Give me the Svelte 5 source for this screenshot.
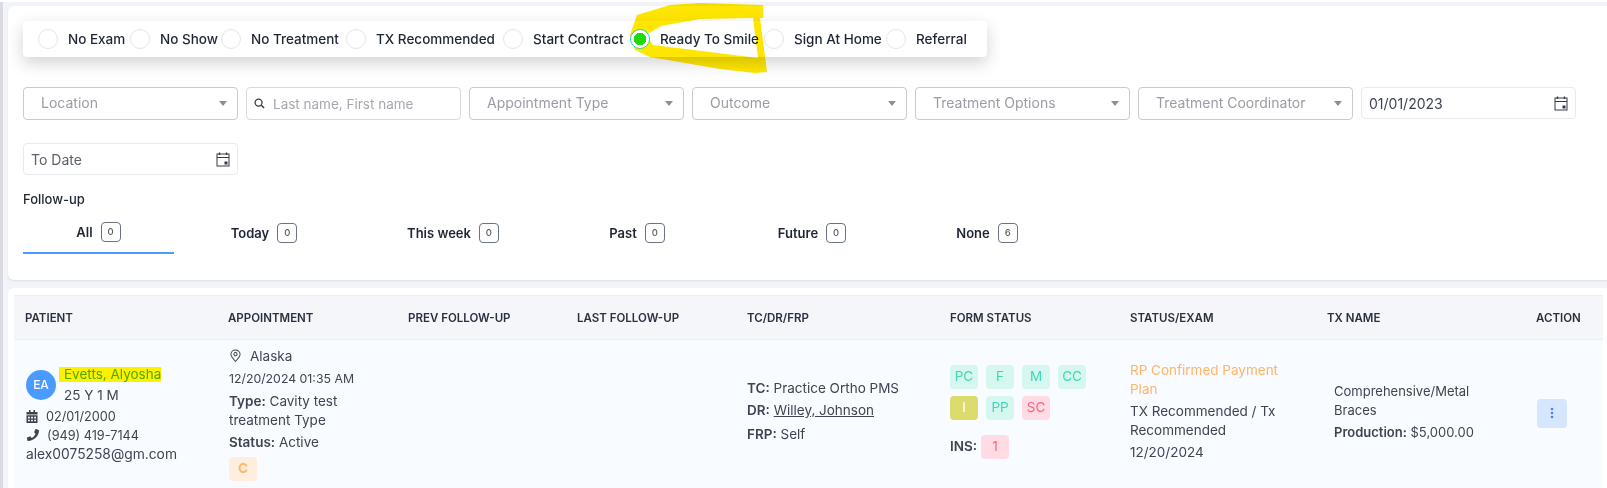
<script lang="ts">
    const statuses = [
        { label: 'No Exam', on: false, width: 92 },
        { label: 'No Show', on: false, width: 91 },
        { label: 'No Treatment', on: false, width: 125 },
        { label: 'TX Recommended', on: false, width: 157 },
        { label: 'Start Contract', on: false, width: 127 },
        { label: 'Ready To Smile', on: true, width: 134 },
        { label: 'Sign At Home', on: false, width: 122 },
        { label: 'Referral', on: false, width: 70 },
    ];

    const selects = ['Location', null, 'Appointment Type', 'Outcome', 'Treatment Options', 'Treatment Coordinator'];

    const tabs = [
        { label: 'All', count: 0, width: 151 },
        { label: 'Today', count: 0, width: 180 },
        { label: 'This week', count: 0, width: 198 },
        { label: 'Past', count: 0, width: 170 },
        { label: 'Future', count: 0, width: 180 },
        { label: 'None', count: 6, width: 170 },
    ];

    const columns = ['Patient', 'Appointment', 'Prev Follow-up', 'Last Follow-up', 'TC/DR/FRP', 'Form Status', 'Status/Exam', 'TX Name', 'Action'];

    const forms = [
        { label: 'PC', kind: 'teal' },
        { label: 'F', kind: 'teal' },
        { label: 'M', kind: 'teal' },
        { label: 'CC', kind: 'teal' },
        { label: 'I', kind: 'olive' },
        { label: 'PP', kind: 'teal' },
        { label: 'SC', kind: 'pink' },
    ];
</script>

{#snippet calendar()}
    <svg class="cal" viewBox="0 0 14 15" width="14" height="15">
        <path d="M3.500 0.500v2.500M10.500 0.500v2.500" stroke="#333a46" stroke-width="1.400" fill="none" />
        <rect x="1" y="2" width="12" height="12" fill="none" stroke="#333a46" stroke-width="1" />
        <path d="M1 5.500h12" stroke="#333a46" stroke-width="1" />
        <rect x="8.500" y="9.500" width="3" height="3" fill="#333a46" />
    </svg>
{/snippet}

<main class="page">
    <section class="card filters-card">
        <div class="status-bar">
            {#each statuses as s}
                <label class="status" style="width: {s.width}px">
                    <span class="radio" class:on={s.on}></span>
                    <span>{s.label}</span>
                </label>
            {/each}
            <svg class="marker" viewBox="0 0 150 76" width="150" height="76">
                <path fill-rule="evenodd" fill="#ffe600" d="M142 5 L142 18 L139 18 L146 72 L134 73 L99 69 L29 57 L14 50 L9 35 L16 15 L49 5 L79 3 Z M132 18 L79 19 L40 26 L25 35 L32 45 L137 58 Z" />
            </svg>
        </div>

        <div class="filters">
            {#each selects as s}
                {#if s}
                    <div class="field select">
                        <span>{s}</span>
                        <i class="caret"></i>
                    </div>
                {:else}
                    <div class="field search">
                        <svg viewBox="0 0 12 12" width="11" height="11">
                            <circle cx="5" cy="5" r="3.800" fill="none" stroke="#333a46" stroke-width="1.400" />
                            <path d="M8 8l3 3" stroke="#333a46" stroke-width="1.500" />
                        </svg>
                        <span>Last name, First name</span>
                    </div>
                {/if}
            {/each}
            <div class="field date">
                <span class="value">01/01/2023</span>
                {@render calendar()}
            </div>
            <div class="field date">
                <span class="value muted">To Date</span>
                {@render calendar()}
            </div>
        </div>

        <h4>Follow-up</h4>
        <div class="tabs">
            {#each tabs as t, i}
                <div class="tab" class:active={i === 0} style="width: {t.width}px">
                    <span>{t.label}</span>
                    <b class="count">{t.count}</b>
                </div>
            {/each}
        </div>
    </section>

    <section class="card table-card">
        <div class="grid head">
            {#each columns as c}
                <div>{c}</div>
            {/each}
        </div>
        <div class="grid row">
            <div class="patient">
                <div class="who">
                    <span class="avatar">EA</span>
                    <div>
                        <div class="name"><span>Evetts, Alyosha</span></div>
                        <div class="age">25 Y 1 M</div>
                    </div>
                </div>
                <div class="line first">
                    <svg viewBox="0 0 12 13" width="12" height="13">
                        <path d="M3 0h1.500v2h3V0H9v2h2.500v2.500H.5V2H3zM.5 5.300h11V13H.5zM2 6.800v1.600h1.800V6.800zm3.100 0v1.600h1.800V6.800zm3.100 0v1.600H10V6.800zM2 9.700v1.600h1.800V9.700zm3.100 0v1.600h1.800V9.700zm3.100 0v1.600H10V9.700z" fill="#3d4250" fill-rule="evenodd" />
                    </svg>
                    <span>02/01/2000</span>
                </div>
                <div class="line">
                    <svg viewBox="0 0 13 13" width="13" height="13">
                        <path d="M12.600 1.100L10 .1c-.3-.1-.6 0-.7.3L8.200 3c-.1.2 0 .5.2.7l1.300 1.100c-.8 1.800-2.200 3.300-4.100 4.100L4.500 7.600c-.2-.2-.5-.3-.7-.2l-2.600 1.100c-.3.1-.4.4-.3.7l.6 2.500c.1.3.3.4.5.4C7.700 12.100 13 6.900 13 1.600c0-.2-.1-.4-.4-.5z" fill="#3d4250" />
                    </svg>
                    <span>(949) 419-7144</span>
                </div>
                <div class="email">alex0075258@gm.com</div>
            </div>

            <div class="appointment">
                <div class="place">
                    <svg viewBox="0 0 12 14" width="11" height="14">
                        <path d="M6 13C3.500 10.300 1 7.800 1 5.200A5 4.800 0 0 1 11 5.200C11 7.800 8.500 10.300 6 13z" fill="none" stroke="#3d4250" stroke-width="1.100" />
                        <circle cx="6" cy="5" r="1.700" fill="none" stroke="#3d4250" stroke-width="1.100" />
                    </svg>
                    <span>Alaska</span>
                </div>
                <div class="when">12/20/2024 01:35 AM</div>
                <div class="type"><b>Type:</b> Cavity test treatment Type</div>
                <div><b>Status:</b> Active</div>
                <span class="chip orange">C</span>
            </div>

            <div></div>
            <div></div>

            <div class="people">
                <div><b>TC:</b> Practice Ortho PMS</div>
                <div><b>DR:</b> <u>Willey, Johnson</u></div>
                <div class="frp"><b>FRP:</b> Self</div>
            </div>

            <div class="forms">
                <div class="chips">
                    {#each forms as f}
                        <span class="chip {f.kind}">{f.label}</span>
                    {/each}
                </div>
                <div class="ins">
                    <b>INS:</b>
                    <span class="chip pink">1</span>
                </div>
            </div>

            <div class="exam">
                <div class="plan">RP Confirmed Payment Plan</div>
                <div>TX Recommended / Tx Recommended</div>
                <div>12/20/2024</div>
            </div>

            <div class="tx">
                <div>Comprehensive/Metal Braces</div>
                <div><b>Production:</b> $5,000.00</div>
            </div>

            <div>
                <button class="kebab" type="button" aria-label="Actions">
                    <svg viewBox="0 0 4 12" width="4" height="12">
                        <circle cx="2" cy="2" r="1.300" fill="#4a7dff" />
                        <circle cx="2" cy="6" r="1.300" fill="#4a7dff" />
                        <circle cx="2" cy="10" r="1.300" fill="#4a7dff" />
                    </svg>
                </button>
            </div>
        </div>
    </section>
</main>

<style>
    :global(body) {
        background: #fff;
        overflow: hidden;
    }

    .page {
        box-sizing: border-box;
        height: 486px;
        margin-top: 2px;
        padding: 4px 0 0 5px;
        border-left: 3px solid #dadbe1;
        background: #f2f4f9;
        font-family: Inter, "Open Sans", sans-serif;
        font-size: 13.500px;
        color: #3f4452;
        overflow: hidden;
    }

    .card {
        box-sizing: border-box;
        background: #fff;
        border-radius: 6px 0 0 6px;
    }

    .filters-card {
        height: 274px;
        padding: 15px 0 0 15px;
        box-shadow: 0 1px 2px rgba(40, 50, 70, 0.1);
    }

    .status-bar {
        position: relative;
        display: flex;
        align-items: center;
        width: 964px;
        height: 36px;
        padding-left: 15px;
        box-sizing: border-box;
        border-radius: 4px;
        background: #fff;
        box-shadow: 0 6px 16px rgba(30, 35, 50, 0.2);
    }

    .status {
        display: flex;
        align-items: center;
        gap: 10px;
        font-size: 13.500px;
        font-weight: 500;
        white-space: nowrap;
        color: #1f2633;
    }

    .radio {
        flex: none;
        width: 20px;
        height: 20px;
        box-sizing: border-box;
        border-radius: 50%;
        border: 1px solid #e4e6ea;
        background: #fff;
    }

    .radio.on {
        position: relative;
        z-index: 1;
        border-color: #28d6a0;
        background: radial-gradient(circle, #22d80e 0 6px, #fff 6.500px);
    }

    .marker {
        position: absolute;
        left: 598px;
        top: -21px;
        mix-blend-mode: multiply;
        pointer-events: none;
    }

    .filters {
        display: grid;
        grid-template-columns: repeat(7, 215px);
        gap: 23px 8px;
        align-items: start;
        margin-top: 30px;
    }

    .field {
        display: flex;
        align-items: center;
        justify-content: space-between;
        box-sizing: border-box;
        border-radius: 4px;
        background: #fff;
    }

    .select {
        height: 33px;
        padding: 0 10px 0 17px;
        border: 1px solid #c9cacd;
        color: #9a9da5;
        font-size: 14px;
    }

    .select span {
        margin-top: -3px;
    }

    .caret {
        border: 4px solid transparent;
        border-top: 5px solid #8d9097;
        border-bottom: 0;
    }

    .search {
        height: 33px;
        justify-content: flex-start;
        gap: 8px;
        padding-left: 7px;
        border: 1px solid #d9dade;
        color: #a5a8ae;
        font-size: 13.500px;
    }

    .date {
        height: 32px;
        padding: 0 7px;
        border: 1px solid #e9eaec;
    }

    .value {
        font-size: 14px;
        color: #3f4452;
    }

    .muted {
        color: #5d616c;
    }

    h4 {
        margin: 16px 0 0;
        font-size: 13px;
        font-weight: 500;
        color: #1f2633;
    }

    .tabs {
        display: flex;
        margin-top: 14px;
    }

    .tab {
        display: flex;
        align-items: center;
        justify-content: center;
        gap: 8px;
        height: 33px;
        padding-bottom: 9px;
        box-sizing: border-box;
        font-size: 13px;
        font-weight: 600;
        color: #1f2633;
    }

    .tab.active {
        border-bottom: 2px solid #4a9bff;
    }

    .count {
        min-width: 20px;
        height: 20px;
        box-sizing: border-box;
        border: 1px solid #6b7280;
        border-radius: 4px;
        font-size: 9.500px;
        font-weight: 500;
        line-height: 18px;
        text-align: center;
        color: #555b68;
    }

    .table-card {
        height: 210px;
        margin-top: 8px;
        padding: 7px 4px 0 6px;
    }

    .grid {
        display: grid;
        grid-template-columns: 203px 180px 169px 170px 203px 180px 197px 209px 1fr;
        padding-left: 11px;
    }

    .head {
        box-sizing: border-box;
        height: 45px;
        padding-top: 1px;
        align-items: center;
        border: 1px solid #eceef3;
        border-width: 1px 0;
        background: #f4f6fa;
        font-size: 11.500px;
        font-weight: 600;
        text-transform: uppercase;
        color: #2a3040;
    }

    .row {
        box-sizing: border-box;
        height: 149px;
        padding-bottom: 6px;
        align-items: center;
        background: #f8fbff;
        line-height: 19px;
    }

    .row b {
        font-weight: 600;
    }

    .patient {
        margin-top: 5px;
    }

    .who {
        display: flex;
        align-items: center;
        gap: 3px;
        margin-left: 1px;
    }

    .avatar {
        display: flex;
        align-items: center;
        justify-content: center;
        width: 30px;
        height: 30px;
        border-radius: 50%;
        background: #4a9bff;
        color: #fff;
        font-size: 12px;
        font-weight: 500;
    }

    .name span {
        display: inline-block;
        padding: 0 0 0 5px;
        background: #fdf000;
        color: #4ea800;
        line-height: 15px;
    }

    .age {
        margin: 2px 0 0 5px;
    }

    .line {
        display: flex;
        align-items: center;
        gap: 8px;
        margin-left: 1px;
        font-size: 12.700px;
    }

    .line.first {
        margin-top: 2px;
    }

    .email {
        margin-left: 1px;
        font-size: 13.800px;
    }

    .appointment {
        margin: 4px 0 0 1px;
    }

    .when {
        font-size: 12.300px;
    }

    .place {
        display: flex;
        align-items: center;
        gap: 9px;
        margin: 0 0 3px 1px;
    }

    .type {
        margin: 4px 0 3px;
        width: 140px;
    }

    .chip {
        display: inline-flex;
        align-items: center;
        justify-content: center;
        width: 28px;
        height: 24px;
        border-radius: 4px;
    }

    .orange {
        margin-top: 5px;
        background: #ffeedd;
        color: #ffb566;
        font-weight: 700;
    }

    .teal {
        background: #d5f7f0;
        color: #3fd8b6;
    }

    .olive {
        background: #dcdc6e;
        color: #fff;
    }

    .pink {
        background: #ffdce3;
        color: #ff5f7f;
    }

    .people div + div {
        margin-top: 3px;
    }

    .people .frp {
        margin-top: 5px;
    }

    .chips {
        display: grid;
        grid-template-columns: repeat(4, 28px);
        gap: 7px 8px;
    }

    .ins {
        display: flex;
        align-items: center;
        gap: 4px;
        margin-top: 15px;
    }

    .exam {
        width: 168px;
    }

    .plan {
        color: #ffb566;
    }

    .exam div + div {
        margin-top: 3px;
    }

    .tx {
        width: 150px;
        margin-left: 7px;
        font-size: 13px;
    }

    .tx div + div {
        margin-top: 3px;
    }

    .kebab {
        display: flex;
        align-items: center;
        justify-content: center;
        width: 30px;
        height: 29px;
        margin: 3px 0 0 1px;
        padding: 0;
        border: 0;
        border-radius: 4px;
        background: #d6e6ff;
    }
</style>
